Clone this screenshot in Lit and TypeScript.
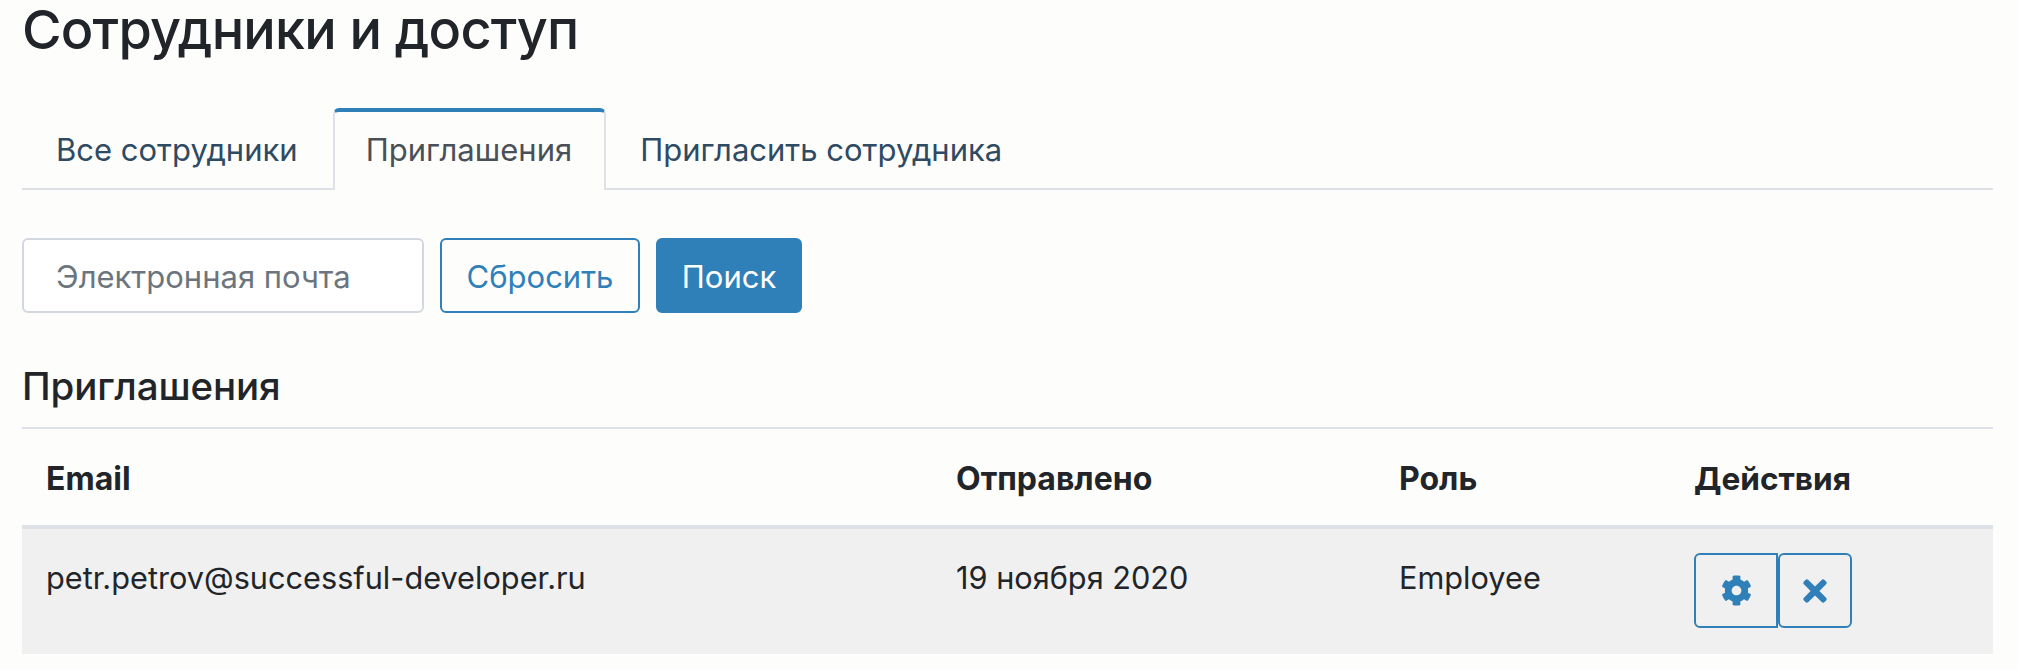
import { LitElement, html, css } from "lit";
import { customElement } from "lit/decorators.js";

@customElement("app-root")
export class AppRoot extends LitElement {
  static styles = css`
    :host {
      display: block;
      min-height: 670px;
      box-sizing: border-box;
      background: #fdfdfc;
      color: #212529;
      font-family: Inter, "Liberation Sans", sans-serif;
      font-size: 31px;
      line-height: 43px;
      padding: 0 25px 0 22px;
      overflow: hidden;
    }
    h1 {
      margin: 0;
      font-size: 54px;
      font-weight: 550;
      line-height: 59px;
      height: 108px;
      letter-spacing: -0.8px;
    }
    .tabs {
      display: flex;
      gap: 1px;
      height: 82px;
      box-sizing: border-box;
      border-bottom: 2.5px solid #dee2e6;
    }
    .tab {
      box-sizing: border-box;
      height: 82px;
      padding: 20px 34px 0;
      color: #2f4a63;
      white-space: nowrap;
    }
    .tab.active {
      color: #495057;
      background: #fdfdfc;
      border: 2.5px solid #dee2e6;
      border-top: 4px solid #2f80b9;
      border-bottom: 0;
      border-radius: 6px 6px 0 0;
      padding: 16px 32px 0 31px;
    }
    .tab.active + .tab { padding-left: 33px; }
    .filters {
      display: flex;
      gap: 16px;
      margin-top: 48px;
    }
    .input {
      box-sizing: border-box;
      width: 402px;
      height: 75px;
      border: 2.5px solid #d3d7df;
      border-radius: 6px;
      background: #fff;
      color: #6c757d;
      padding: 2px 32px 0;
      display: flex;
      align-items: center;
    }
    .btn {
      box-sizing: border-box;
      height: 75px;
      border-radius: 6px;
      border: 2px solid #2f80b9;
      color: #2f80b9;
      display: flex;
      align-items: center;
      justify-content: center;
      background: transparent;
      padding-top: 2px;
    }
    .reset { width: 200px; }
    .search { width: 146px; background: #2f80b9; color: #fff; }
    h2 {
      margin: 52px 0 0;
      font-size: 38.5px;
      font-weight: 500;
      line-height: 42px;
      height: 62px;
      letter-spacing: -0.1px;
    }
    table {
      width: 100%;
      border-collapse: collapse;
      table-layout: fixed;
    }
    th {
      text-align: left;
      font-size: 32px;
      font-weight: 700;
      height: 99px;
      padding: 2px 24px 0;
      box-sizing: border-box;
      border-top: 2px solid #dee2e6;
      border-bottom: 4px solid #dee2e6;
    }
    th:last-child { font-size: 31.6px; }
    td {
      background: #f0f0f0;
      height: 127px;
      padding: 27px 24px 0;
      box-sizing: border-box;
      vertical-align: top;
      font-size: 30.7px;
    }
    td.actions { padding-top: 24px; }
    .col1 { width: 910px; }
    .col2 { width: 443px; }
    .col3 { width: 295px; }
    .icons { display: flex; }
    .ib {
      box-sizing: border-box;
      height: 75px;
      border: 2px solid #2f80b9;
      display: flex;
      align-items: center;
      justify-content: center;
    }
    .ib svg { fill: #2f80b9; display: block; }
    .gear { width: 84px; border-radius: 6px 0 0 6px; }
    .gear svg { width: 31px; height: 31px; }
    .close { width: 74px; border-radius: 6px; }
    .close svg { width: 24px; height: 34px; }
  `;

  render() {
    return html`
      <h1>Сотрудники и доступ</h1>
      <div class="tabs">
        <div class="tab">Все сотрудники</div>
        <div class="tab active">Приглашения</div>
        <div class="tab">Пригласить сотрудника</div>
      </div>
      <div class="filters">
        <div class="input">Электронная почта</div>
        <div class="btn reset">Сбросить</div>
        <div class="btn search">Поиск</div>
      </div>
      <h2>Приглашения</h2>
      <table>
        <colgroup>
          <col class="col1" /><col class="col2" /><col class="col3" /><col />
        </colgroup>
        <thead>
          <tr><th>Email</th><th>Отправлено</th><th>Роль</th><th>Действия</th></tr>
        </thead>
        <tbody>
          <tr>
            <td>petr.petrov@successful-developer.ru</td>
            <td>19 ноября 2020</td>
            <td>Employee</td>
            <td class="actions">
              <div class="icons">
                <div class="ib gear">
                  <svg viewBox="0 0 512 512"><path d="M487.4 315.7l-42.6-24.6c4.3-23.2 4.3-47 0-70.2l42.6-24.6c4.9-2.8 7.1-8.6 5.5-14-11.1-35.6-30-67.8-54.7-94.6-3.8-4.1-10-5.1-14.8-2.3L380.8 110c-17.9-15.4-38.5-27.3-60.8-35.1V25.8c0-5.6-3.9-10.5-9.4-11.7-36.7-8.2-74.3-7.8-109.2 0-5.5 1.2-9.4 6.1-9.4 11.7V75c-22.2 7.9-42.8 19.8-60.8 35.1L88.7 85.5c-4.9-2.8-11-1.9-14.8 2.3-24.7 26.7-43.6 58.9-54.7 94.6-1.7 5.4.6 11.2 5.5 14L67.3 221c-4.3 23.2-4.3 47 0 70.2l-42.6 24.6c-4.9 2.8-7.1 8.6-5.5 14 11.1 35.6 30 67.8 54.7 94.6 3.8 4.1 10 5.1 14.8 2.3l42.6-24.6c17.9 15.4 38.5 27.3 60.8 35.1v49.2c0 5.6 3.9 10.5 9.4 11.7 36.7 8.2 74.3 7.8 109.2 0 5.5-1.2 9.4-6.1 9.4-11.7v-49.2c22.2-7.9 42.8-19.8 60.8-35.1l42.6 24.6c4.9 2.8 11 1.9 14.8-2.3 24.7-26.7 43.6-58.9 54.7-94.6 1.5-5.5-.7-11.3-5.6-14.1zM256 336c-44.1 0-80-35.9-80-80s35.9-80 80-80 80 35.9 80 80-35.9 80-80 80z"/></svg>
                </div>
                <div class="ib close">
                  <svg viewBox="0 0 352 512"><path d="M242.72 256l100.07-100.07c12.28-12.28 12.28-32.19 0-44.48l-22.24-22.24c-12.28-12.28-32.19-12.28-44.48 0L176 189.28 75.93 89.21c-12.28-12.28-32.19-12.28-44.48 0L9.21 111.45c-12.28 12.28-12.28 32.19 0 44.48L109.28 256 9.21 356.07c-12.28 12.28-12.28 32.19 0 44.48l22.24 22.24c12.28 12.28 32.2 12.28 44.48 0L176 322.72l100.07 100.07c12.28 12.28 32.2 12.28 44.48 0l22.24-22.24c12.28-12.28 12.28-32.19 0-44.48L242.72 256z"/></svg>
                </div>
              </div>
            </td>
          </tr>
        </tbody>
      </table>
    `;
  }
}
